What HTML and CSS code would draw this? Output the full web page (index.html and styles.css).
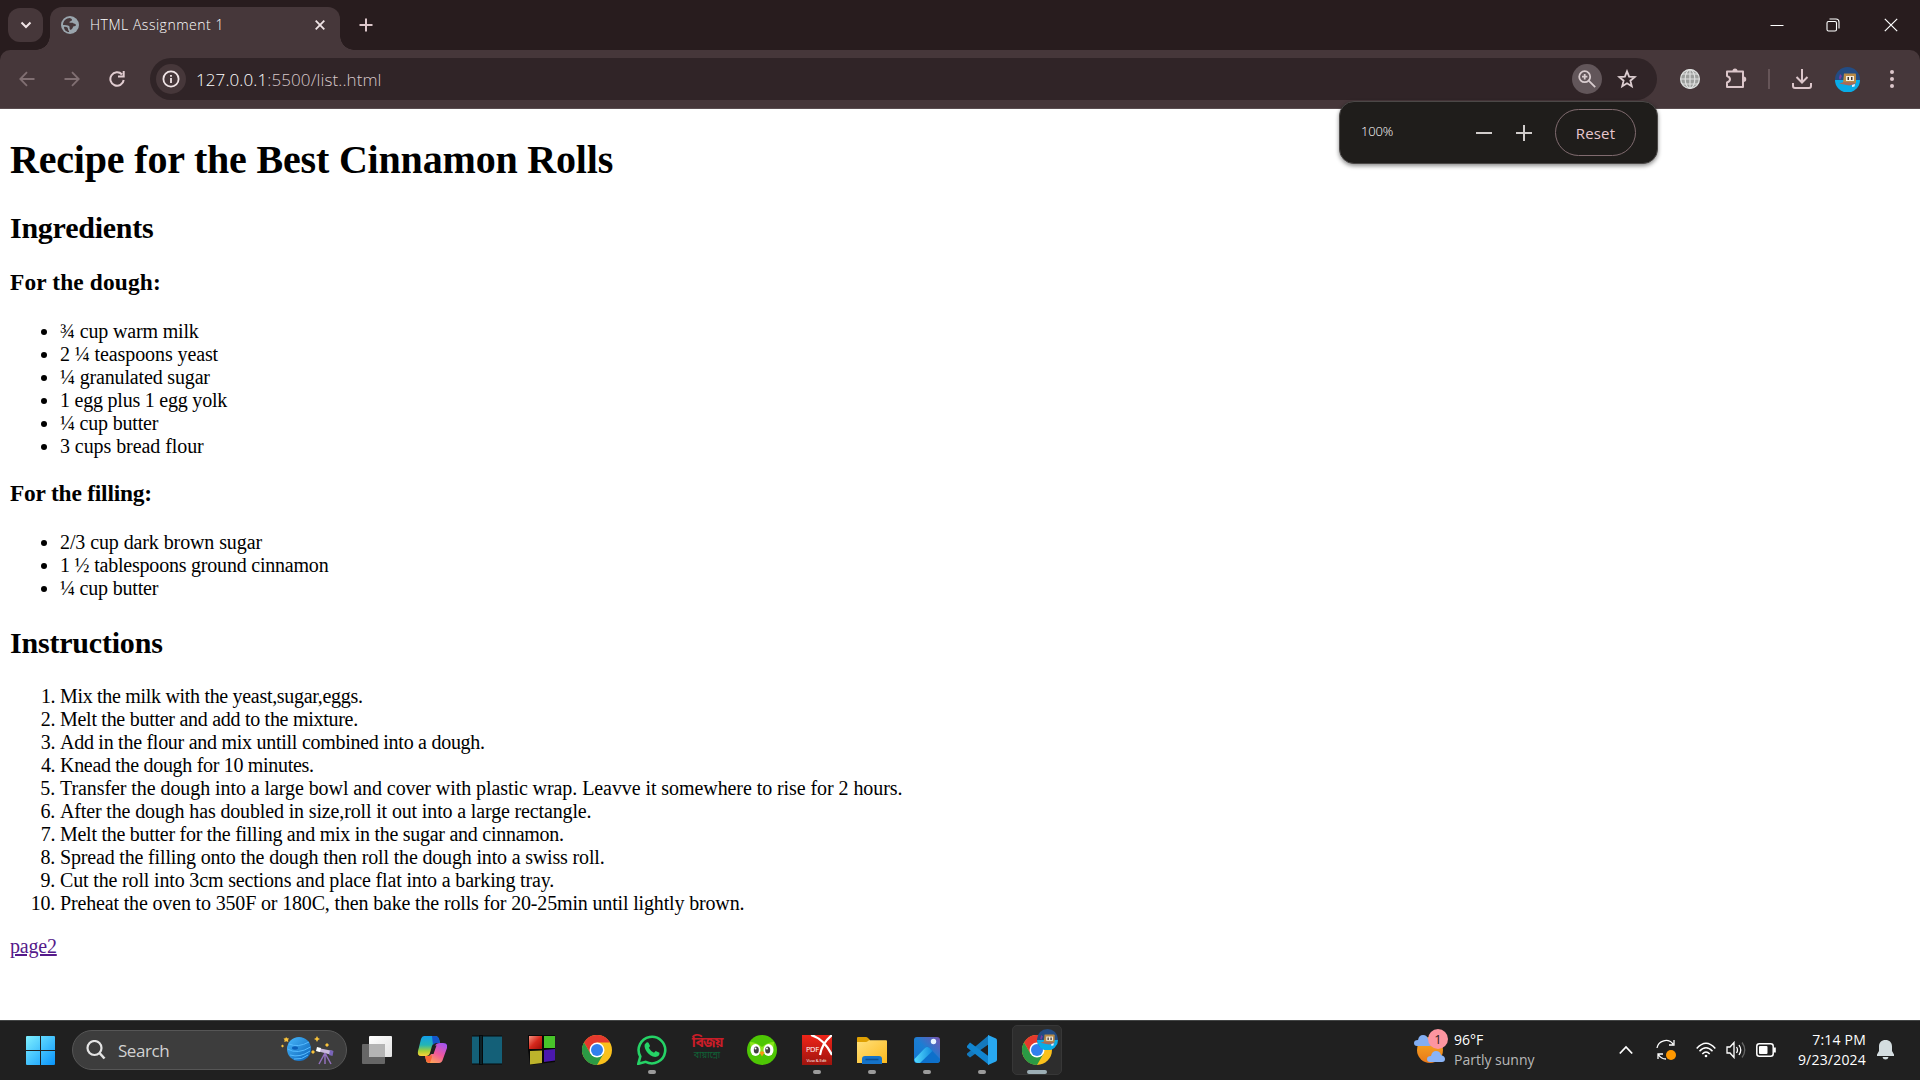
FILE: index.html
```html
<!DOCTYPE html>
<html lang="en">
<head>
<meta charset="utf-8">
<title>HTML Assignment 1</title>
<link rel="stylesheet" href="styles.css">
</head>
<body>
<div class="screen">
  <header class="tabstrip">
    <div class="tab-search"><svg width="12" height="8" viewBox="0 0 12 8"><path d="M1.5 1.5 6 6l4.5-4.5" fill="none" stroke="#f0e4e6" stroke-width="2"/></svg></div>
    <div class="tab">
      <svg class="favicon" width="18" height="18" viewBox="0 0 18 18"><circle cx="9" cy="9" r="9" fill="#9aa5ad"/><path d="M9 2c-4 0-7 3-7 7 2 0 5 0 6 1 1.200 1 0 2.500 1 3.500S12 12 12 11s3-.5 3-2-2.500-1-3-2-3 .5-3.500-.5S11 5 11 4s-1-1.500-2-2z" fill="#46373a"/><path d="M3 11c2-.5 4 .5 4 2s1.500 2 1 3C5 16 3 13.500 3 11z" fill="#46373a"/></svg>
      <span class="tab-title">HTML Assignment 1</span>
      <svg class="tab-close" width="10" height="10" viewBox="0 0 10 10"><path d="M.7.7l8.600 8.600M9.300.7.700 9.300" stroke="#f0e4e6" stroke-width="1.800"/></svg>
    </div>
    <svg class="new-tab" width="14" height="14" viewBox="0 0 14 14"><path d="M7 .5v13M.5 7h13" stroke="#dcc6ca" stroke-width="2"/></svg>
    <div class="window-controls">
      <svg width="14" height="14" viewBox="0 0 14 14"><path d="M.5 7.500h13" stroke="#fff"/></svg>
      <svg width="14" height="14" viewBox="0 0 14 14" fill="none" stroke="#fff" stroke-width="1.100"><rect x="1" y="3.500" width="9.500" height="9.500" rx="1.500"/><path d="M3.500 1h6.500q3 0 3 3v6.500"/></svg>
      <svg width="14" height="14" viewBox="0 0 14 14"><path d="M.8.8l12.400 12.400M13.200.800.800 13.200" stroke="#fff" stroke-width="1.200"/></svg>
    </div>
  </header>

  <nav class="toolbar">
    <div class="nav-buttons">
      <svg width="16" height="16" viewBox="0 0 16 16" fill="none" stroke="#806f72" stroke-width="1.800"><path d="M15.500 8H1.500M8 1.200 1.300 8 8 14.800"/></svg>
      <svg width="16" height="16" viewBox="0 0 16 16" fill="none" stroke="#806f72" stroke-width="1.800"><path d="M.5 8h14M8 1.200 14.700 8 8 14.800"/></svg>
      <svg width="16" height="16" viewBox="0 0 16 16" fill="none" stroke="#e2cdd1" stroke-width="2"><path d="M13 3.500A6.700 6.700 0 1 0 14.700 9M14.700 0v5.500H9"/></svg>
    </div>
    <div class="address">
      <span class="round info"><svg width="18" height="18" viewBox="0 0 18 18"><circle cx="9" cy="9" r="7.600" fill="none" stroke="#f0e4e6" stroke-width="1.800"/><path d="M9 8v5M9 5v1.800" stroke="#f0e4e6" stroke-width="1.800"/></svg></span>
      <span class="url"><b>127.0.0.1</b>:5500/list..html</span>
      <span class="round zoomed"><svg width="18" height="18" viewBox="0 0 18 18" fill="none" stroke="#d8cccf" stroke-width="1.800"><circle cx="6.700" cy="6.700" r="5.500"/><path d="M10.700 10.700l6.500 6.500M6.700 4v5.400M4 6.700h5.400"/></svg></span>
      <svg class="star" width="20" height="20" viewBox="0 0 20 20"><path d="M10 2.300l2.100 5.300 5.700.4-4.400 3.700 1.400 5.600-4.800-3-4.800 3 1.400-5.600L2.200 8l5.700-.4z" fill="none" stroke="#dccdd0" stroke-width="1.800"/></svg>
    </div>
    <div class="extensions">
      <svg width="20" height="20" viewBox="0 0 20 20"><circle cx="10" cy="10" r="10" fill="#9d9f9d"/><g fill="none" stroke="#dfe0df" stroke-width="1.200"><circle cx="10" cy="10" r="9.300"/><ellipse cx="10" cy="10" rx="4.800" ry="9.300"/><path d="M10 0v20M.5 10h19M2 5h16M2 15h16"/></g></svg>
      <svg width="22" height="22" viewBox="0 0 22 22"><path d="M2 3.500h16v15.500H2v-4.500q3-1 3-3.200t-3-3.300z" fill="none" stroke="#dcc6ca" stroke-width="2" stroke-linejoin="round"/><path d="M7.500 3a2.500 2.500 0 0 1 5 0M18.500 8.500a2.600 2.600 0 0 1 0 5.500" fill="#dcc6ca"/></svg>
      <i class="divider"></i>
      <svg width="22" height="22" viewBox="0 0 22 22" fill="none" stroke="#dcc6ca" stroke-width="2"><path d="M11 1v13M5.500 9l5.500 5.500L16.500 9M2 15v3q0 2 2 2h14q2 0 2-2v-3"/></svg>
      <svg width="25" height="25" viewBox="0 0 25 25"><use href="#avatar"/></svg>
      <svg width="4" height="18" viewBox="0 0 4 18" fill="#dcc6ca"><circle cx="2" cy="2" r="2"/><circle cx="2" cy="9" r="2"/><circle cx="2" cy="16" r="2"/></svg>
    </div>
  </nav>

  <main class="page">
    <h1>Recipe for the Best Cinnamon Rolls</h1>
    <h2>Ingredients</h2>
    <h3>For the dough:</h3>
    <ul class="dough">
      <li>¾ cup warm milk</li>
      <li>2 ¼ teaspoons yeast</li>
      <li>¼ granulated sugar</li>
      <li>1 egg plus 1 egg yolk</li>
      <li>¼ cup butter</li>
      <li>3 cups bread flour</li>
    </ul>
    <h3 class="filling-title">For the filling:</h3>
    <ul class="filling">
      <li>2/3 cup dark brown sugar</li>
      <li>1 ½ tablespoons ground cinnamon</li>
      <li>¼ cup butter</li>
    </ul>
    <h2 class="instructions">Instructions</h2>
    <ol>
      <li>Mix the milk with the yeast,sugar,eggs.</li>
      <li>Melt the butter and add to the mixture.</li>
      <li>Add in the flour and mix untill combined into a dough.</li>
      <li>Knead the dough for 10 minutes.</li>
      <li>Transfer the dough into a large bowl and cover with plastic wrap. Leavve it somewhere to rise for 2 hours.</li>
      <li>After the dough has doubled in size,roll it out into a large rectangle.</li>
      <li>Melt the butter for the filling and mix in the sugar and cinnamon.</li>
      <li>Spread the filling onto the dough then roll the dough into a swiss roll.</li>
      <li>Cut the roll into 3cm sections and place flat into a barking tray.</li>
      <li>Preheat the oven to 350F or 180C, then bake the rolls for 20-25min until lightly brown.</li>
    </ol>
    <a class="next" href="#page2">page2</a>
  </main>

  <footer class="taskbar">
    <svg class="start" width="29" height="29" viewBox="0 0 29 29"><defs><linearGradient id="win" x1="0" y1="0" x2="29" y2="29" gradientUnits="userSpaceOnUse"><stop stop-color="#7ff0ff"/><stop offset="1" stop-color="#0994fb"/></linearGradient></defs><path fill="url(#win)" d="M1 0h13v14H0V1q0-1 1-1zM15 0h13q1 0 1 1v13H15zM0 15h14v14H1q-1 0-1-1zM15 15h14v13q0 1-1 1H15z"/></svg>
    <div class="search">
      <svg width="20" height="20" viewBox="0 0 20 20" fill="none" stroke="#e4e4e4" stroke-width="2.200"><circle cx="8.500" cy="8" r="7"/><path d="M13.500 13l5 5.500" stroke-width="2.600"/></svg>
      <span>Search</span>
      <svg class="space" width="54" height="30" viewBox="0 0 54 30"><defs><linearGradient id="planet" x2="1" y2="1"><stop stop-color="#48b8fb"/><stop offset="1" stop-color="#0960b8"/></linearGradient></defs><circle cx="18" cy="14" r="12" fill="url(#planet)"/><path d="M8 9q9 4 20-2M6.500 14q10 6 23-2M9 20q10 3 20-4M13 24q8 1 14-4" fill="none" stroke="#54baff" stroke-width="1"/><ellipse cx="14" cy="13" rx="3" ry="1.700" fill="#0b5eb8"/><path d="M5 2l1.200 1.300 1.800.2-1 1.600.3 1.900-2-.8-2 .8.300-2L2.500 3.500l2-.3zM36 1l1 2 2 1-2 1-1 2-1-2-2-1 2-1zM46 8l2 2-2 2-2-2zM1.500 9.500l1.500 1.500-1.500 1.500L0 11zM32 15l2 2-2 2-2-2z" fill="#fac33a"/><path d="M37 13l15 3-1 4-15-4z" fill="#c7b8dc"/><path d="M36 12l4 1-1 4-4-1z" fill="#fff"/><path d="M49 15l3.500 1-1 5-3.500-1z" fill="#7964b8"/><path d="M44 18l-6 11M44 18v11M44 18l6 11" stroke="#9270bd" stroke-width="1.500"/></svg>
    </div>
    <div class="apps">
      <div class="app"><svg width="30" height="30" viewBox="0 0 30 30"><defs><linearGradient id="tv" x2="1" y2="1"><stop stop-color="#fff"/><stop offset="1" stop-color="#e2e2e2"/></linearGradient></defs><rect y="9" width="23" height="20" rx="1" fill="#666"/><rect x="7" y="1" width="23" height="21" rx="1" fill="url(#tv)"/><path d="M7 9h16v13H8q-1 0-1-1z" fill="#b4b4b4"/></svg></div>
      <div class="app"><svg width="30" height="30" viewBox="0 0 30 30"><defs><linearGradient id="cpa" x1="0" y1="0" x2="0" y2="1"><stop stop-color="#139ee9"/><stop offset=".45" stop-color="#23b5b5"/><stop offset=".75" stop-color="#a5cf36"/><stop offset="1" stop-color="#ffd23a"/></linearGradient><linearGradient id="cpb" x1=".8" y1="0" x2=".2" y2="1"><stop stop-color="#a454f1"/><stop offset=".5" stop-color="#f1589b"/><stop offset="1" stop-color="#ffad50"/></linearGradient></defs><path d="M7 1h11q3 0 4 3l1 4h-4q-3 0-4 3l-2 7q-1 3-4 3H4q-4 0-3-5L4 4q1-3 3-3z" fill="url(#cpa)"/><path d="M15 1h3q3 0 4 3l1 4h-4q-2 0-3 2z" fill="#1455cb"/><path d="M23 8h3q5 0 4 5l-4 11q-1 4-4 4H12q-3 0-3-3l-1-4h3q3 0 4-4l3-6q1-3 5-3z" fill="url(#cpb)"/><path d="M8 21h4q2 0 2-2l1 3-2 6q-4-1-4-3z" fill="#fa6738"/><path d="M16.500 10.500h3l-3 8.500h-3.500z" fill="#202020"/></svg></div>
      <div class="app"><svg width="30" height="30" viewBox="0 0 30 30"><path fill="#146078" d="M0 1h30v28H0z"/><path fill="#050a0c" d="M7 0h4v30H7zM0 .5h30v1H0zM0 28.500h30v1H0z"/><path fill="#235a6a" d="M8.700 1h.6v28h-.6z"/></svg></div>
      <div class="app"><svg width="30" height="30" viewBox="0 0 30 30"><defs><linearGradient id="redsq" x2="1" y2="1"><stop stop-color="#f59381"/><stop offset=".5" stop-color="#d5281c"/><stop offset="1" stop-color="#9a0e08"/></linearGradient></defs><path d="M1 0h27v27L3 30 1 15z" fill="#080808"/><path d="M2 1h13v13H2z" fill="url(#redsq)"/><path d="M17 1h11v12H17z" fill="#48c42a"/><path d="M3 16l12-.5V28L3 29.500z" fill="#bdb32b"/><path d="M17 15l11-1v11.500L17 27z" fill="#4b18ad"/></svg></div>
      <div class="app"><svg width="30" height="30" viewBox="0 0 30 30"><g id="chrome"><circle cx="15" cy="15" r="15" fill="#fbc11c"/><path d="M2 7.500A15 15 0 0 1 28 7.500H15L8.500 18.700z" fill="#e5392d"/><path d="M2 7.500A15 15 0 0 0 15 30l6.500-11.300H8.500z" fill="#2b9a45"/><circle cx="15" cy="15" r="7.500" fill="#fff"/><circle cx="15" cy="15" r="6" fill="#3180ee"/></g></svg></div>
      <div class="app run"><svg width="30" height="30" viewBox="0 0 30 30"><path d="M1.300 28.800l2-7.300A13.300 13.300 0 1 1 8.700 26.800z" fill="none" stroke="#25d366" stroke-width="2.600"/><path d="M9.500 7.500q1-.8 2 .2l1.500 3q0 1-1.200 2 1.700 3.500 5.200 5l1.700-1.700 3.800 1.800q.3 4-4.300 4.200C12 21.500 6.500 14 7.700 9.500z" fill="#25d366"/></svg></div>
      <div class="app bijoy"><span class="bn-top">বিজয়</span><span class="bn-bottom">বায়ান্নো</span></div>
      <div class="app"><svg width="30" height="30" viewBox="0 0 30 30"><circle cx="15" cy="15" r="15" fill="#4ec604"/><path d="M3 7q6 0 12 5 6-5 12-5 0 8-4 12H7Q3 14 3 7z" fill="#8ae51b"/><ellipse cx="8.500" cy="15" rx="5" ry="6" fill="#fff"/><ellipse cx="21.500" cy="15" rx="5" ry="6" fill="#fff"/><ellipse cx="9.300" cy="15" rx="2.500" ry="3.500" fill="#414141"/><ellipse cx="20.700" cy="15" rx="2.500" ry="3.500" fill="#414141"/><circle cx="8.500" cy="13.500" r="1" fill="#fff"/><circle cx="20" cy="13.500" r="1" fill="#fff"/><path d="M12.500 17.500l2.500-1.500 2.500 1.500-2.500 4z" fill="#f69a12"/></svg></div>
      <div class="app run"><svg width="30" height="30" viewBox="0 0 30 30"><defs><linearGradient id="pdf" x2="0" y2="1"><stop stop-color="#ee2418"/><stop offset="1" stop-color="#9f140e"/></linearGradient></defs><path fill="url(#pdf)" d="M0 0h30v30H0z"/><path d="M9 0q13 4 21 20M30 0Q20 8 18 20" fill="none" stroke="#fff" stroke-width="2.200"/><text class="pdf-name" x="4" y="17">PDF</text><text class="pdf-sub" x="4.500" y="26.500">View &amp; Edit</text></svg></div>
      <div class="app run"><svg width="30" height="30" viewBox="0 0 30 30"><defs><linearGradient id="folder" x2="1" y2="1"><stop stop-color="#ffe07a"/><stop offset="1" stop-color="#fcb91d"/></linearGradient></defs><path d="M0 3q0-1 1-1h8q1 0 2 1l2 2v6H0z" fill="#dfa003"/><path d="M0 7h9q1 0 2-1l1-.7h17q1 0 1 1V28H0z" fill="url(#folder)"/><path d="M5 29v-5q0-3 3-3h14q3 0 3 3v5z" fill="#1573c9"/><path d="M8.500 24.500h13" stroke="#0b4f92" stroke-width="1.500"/></svg></div>
      <div class="app run"><svg width="30" height="30" viewBox="0 0 30 30"><defs><linearGradient id="photo" x1="0" y1="1" x2="1" y2="0"><stop stop-color="#1375d0"/><stop offset=".5" stop-color="#1b7ed3"/><stop offset="1" stop-color="#7a55b0"/></linearGradient><linearGradient id="hill"><stop stop-color="#55dcff"/><stop offset="1" stop-color="#1289dc"/></linearGradient></defs><rect x="2" y="2" width="26" height="26" rx="3" fill="url(#photo)"/><path d="M3 27L13 13q2-2.500 4.500 0L28 24q0 4-4 4H6q-2 0-3-1z" fill="#0d70cb"/><path d="M2.500 24L13 13q2-2 4.500 0l3 3L8 28H6q-3 0-3.500-3z" fill="url(#hill)"/><circle cx="21.500" cy="6.500" r="2.700" fill="#e9f6ff"/></svg></div>
      <div class="app run"><svg width="30" height="30" viewBox="0 0 30 30"><path d="M22 0v9L3 22.500 0 20v-1.500z" fill="#1479bd"/><path d="M0 11l3-3.500 19 14V30L0 12.500z" fill="#1185d0"/><path d="M21 0l8 3.500q1 .5 1 2v19q0 1.500-1 2L21 30z" fill="#28a8f1"/></svg></div>
      <div class="app run active"><svg width="30" height="30" viewBox="0 0 30 30"><use href="#chrome"/></svg><svg class="profile" width="21" height="21" viewBox="0 0 25 25"><g id="avatar"><circle cx="12.500" cy="12.500" r="12.500" fill="#234c83"/><path d="M0 13h25a12.500 12.500 0 0 1-25 0z" fill="#09ace7"/><path d="M9 6.500h11q1 0 1 1V16H8z" fill="#b78a47"/><path d="M11 9h8v5h-8z" fill="#f4eddd"/><path d="M12.500 10h1.500v3h-1.500zM16 10h1.500v3H16z" fill="#3d3531"/><path d="M4 16.500l5-1.500 10 .5 2 1.500-7 1.500z" fill="#a76a5c"/><path d="M5 7l2 2-2 4-1-2z" fill="#783ba5"/><path d="M17 18l3-1-.5 2.500-2.500.5z" fill="#eef"/></g></svg></div>
    </div>
    <div class="weather">
      <span class="weather-icon">
        <svg width="32" height="30" viewBox="0 0 32 30"><defs><linearGradient id="sun" x2="0" y2="1"><stop stop-color="#f8ae24"/><stop offset="1" stop-color="#e97819"/></linearGradient></defs><circle cx="16" cy="15" r="13" fill="url(#sun)"/><path d="M3 11q-3 0-3-3t4-3q1-5 5-5t5 4q4 1 4 4t-3 3z" fill="#82aef3"/><path d="M16 27q-3 0-3-3t4-3q1-5 5-5t5 4q4 1 4 4t-3 3z" fill="#8ab4f7"/></svg>
        <b class="count">1</b>
      </span>
      <span class="weather-text"><span class="temp">96°F</span><span class="sky">Partly sunny</span></span>
    </div>
    <div class="tray">
      <svg width="14" height="10" viewBox="0 0 14 10"><path d="M.8 8.500L7 2l6.200 6.500" fill="none" stroke="#fff" stroke-width="1.800"/></svg>
      <svg width="20" height="22" viewBox="0 0 20 22"><path d="M1 9a9 9 0 0 1 16-4M18 1v5h-5M2 20v-5h5M2 15q3 5 8 5" fill="none" stroke="#fff" stroke-width="1.300"/><circle cx="15" cy="16" r="5" fill="#ff9800"/></svg>
      <svg width="20" height="16" viewBox="0 0 20 16" fill="none" stroke="#fff" stroke-width="1.500"><path d="M.7 6.500Q10-4 19.300 6.500M3.500 9.200q6.500-7 13 0M6.300 12q3.700-4 7.400 0"/><circle cx="10" cy="14" r="1.300" fill="#fff" stroke="none"/></svg>
      <svg width="21" height="18" viewBox="0 0 21 18" fill="none" stroke="#fff" stroke-width="1.300"><path d="M1 6h3l4-4.500v15L4 12H1zM10.500 6q2 3 0 6M13 4q3.500 5 0 10"/><path d="M16 1.500q5.500 7.500 0 15" stroke="#666"/></svg>
      <svg width="20" height="14" viewBox="0 0 20 14"><rect x=".8" y=".8" width="16.400" height="12.400" rx="2.500" fill="none" stroke="#fff" stroke-width="1.500"/><rect x="3" y="3" width="8.500" height="8" rx="1" fill="#fff"/><path d="M18.800 4.500v5" stroke="#fff" stroke-width="2"/></svg>
    </div>
    <div class="clock"><span class="hour">7:14 PM</span><span class="date">9/23/2024</span></div>
    <svg class="bell" width="17" height="20" viewBox="0 0 17 20"><path d="M8.500 0C4.500 0 2 2.500 2 6.500V11L0 14.500V16h17v-1.500L15 11V6.500C15 2.500 12.500 0 8.500 0zM5.500 17h6q-.5 2.500-3 2.500t-3-2.500z" fill="#d4dde0"/></svg>
  </footer>

  <aside class="zoom-bubble">
    <span class="percent">100%</span>
    <svg width="16" height="16" viewBox="0 0 16 16"><path d="M0 8h16" stroke="#d0cccb" stroke-width="2"/></svg>
    <svg width="16" height="16" viewBox="0 0 16 16"><path d="M0 8h16M8 0v16" stroke="#d0cccb" stroke-width="2"/></svg>
    <span class="reset">Reset</span>
  </aside>
</div>
</body>
</html>
```
FILE: styles.css
```css
* { box-sizing: border-box; }
body { margin: 0; background: #fff; }
svg { display: block; flex: none; }
.screen { position: relative; width: 1920px; height: 1080px; display: flex; flex-direction: column; overflow: hidden; font-family: "Open Sans", "Noto Sans", sans-serif; }

/* browser window */
.tabstrip { flex: none; height: 50px; display: flex; align-items: center; padding-left: 8px; background: #281c1e; box-shadow: 0 12px 0 #281c1e; }
.tab-search { width: 35px; height: 34px; border-radius: 12px; background: #46373a; display: grid; place-items: center; }
.tab { position: relative; z-index: 1; width: 290px; height: 43px; margin: 7px 0 0 7px; padding: 0 15px 7px 11px; display: flex; align-items: center; border-radius: 12px 12px 0 0; background: #46373a; }
.tab::before, .tab::after { content: ""; position: absolute; bottom: 0; width: 14px; height: 14px; }
.tab::before { left: -14px; background: radial-gradient(circle at 0 0, transparent 13.500px, #46373a 14px); }
.tab::after { right: -14px; background: radial-gradient(circle at 100% 0, transparent 13.500px, #46373a 14px); }
.tab-title { margin-left: 11px; flex: 1; font-size: 14px; font-weight: 300; line-height: 20px; letter-spacing: .52px; color: #fff; white-space: nowrap; }
.new-tab { margin-left: 19px; }
.window-controls { margin-left: auto; padding-right: 22px; display: flex; }
.window-controls svg { margin-left: 42px; }
.window-controls svg:last-child { margin-left: 44px; }
.toolbar { position: relative; flex: none; height: 59px; display: flex; align-items: center; background: #46373a; border-bottom: 1px solid #5a4d50; border-radius: 10px 10px 0 0; }
.nav-buttons { width: 150px; padding-left: 19px; display: flex; gap: 29px; }
.address { width: 1507px; height: 42px; border-radius: 21px; padding: 0 20px 0 6px; display: flex; align-items: center; background: #302427; }
.round { width: 30px; height: 30px; border-radius: 50%; display: grid; place-items: center; }
.info { background: #46373a; }
.zoomed { background: #62565a; margin-right: 15px; }
.url { flex: 1; margin-left: 10px; font-size: 17px; font-weight: 300; letter-spacing: .1px; color: #d8c8cb; }
.url b { font-weight: 300; color: #fff; }
.extensions { margin-left: 23px; display: flex; align-items: center; }
.extensions svg:nth-child(2) { margin-left: 25px; }
.divider { width: 2px; height: 20px; margin: 0 21px 0 21px; background: #665558; }
.extensions svg:nth-child(5) { margin-left: 22px; }
.extensions svg:nth-child(6) { margin-left: 30px; }

/* document */
.page { flex: 1; padding: 28px 10px 0; background: #fff; color: #000; font: 20px/23px "Liberation Serif", "Times New Roman", serif; }
.page h1 { margin: 0 0 28px; font-size: 40px; line-height: 46px; letter-spacing: -.18px; }
.page h2 { margin: 0 0 24px; font-size: 30px; line-height: 34px; letter-spacing: -.25px; }
.page h3 { margin: 0 0 24px; font-size: 23.400px; line-height: 27px; letter-spacing: .13px; }
.page .filling-title { letter-spacing: -.2px; }
.page ul, .page ol { margin: 0 0 22px; padding-left: 50px; letter-spacing: -.16px; }
.page .instructions { margin: 26px 0 25px; letter-spacing: -.2px; }
.page ol { margin-bottom: 20px; }
.dough li:nth-child(2) { letter-spacing: -.1px; }
.dough li:nth-child(4) { letter-spacing: -.22px; }
.dough li:nth-child(5) { letter-spacing: -.2px; }
.dough li:nth-child(6) { letter-spacing: -.07px; }
.filling li:nth-child(1) { letter-spacing: -.1px; }
.filling li:nth-child(2) { letter-spacing: -.21px; }
.filling li:nth-child(3) { letter-spacing: -.2px; }
ol li:nth-child(1) { letter-spacing: -.31px; }
ol li:nth-child(2) { letter-spacing: -.28px; }
ol li:nth-child(3) { letter-spacing: -.27px; }
ol li:nth-child(4) { letter-spacing: -.31px; }
ol li:nth-child(5) { letter-spacing: -.075px; }
ol li:nth-child(6) { letter-spacing: -.145px; }
ol li:nth-child(7) { letter-spacing: -.27px; }
ol li:nth-child(8) { letter-spacing: -.168px; }
.next { color: #551a8b; letter-spacing: -.2px; }

/* taskbar */
.taskbar { flex: none; height: 60px; padding-bottom: 1px; border-top: 1px solid #434545; background: #202020; display: flex; align-items: center; }
.start { margin-left: 26px; }
.search { width: 275px; height: 40px; margin-left: 17px; padding: 0 11px 0 13px; display: flex; align-items: center; border-radius: 20px; border: 1px solid #565656; background: #3d3d3d; color: #d2d2d2; font-size: 17px; letter-spacing: -.45px; }
.search span { margin-left: 12px; flex: 1; }
.apps { margin-left: 5px; display: flex; }
.app { position: relative; width: 50px; height: 50px; margin-right: 5px; display: grid; place-items: center; border-radius: 5px; }
.run::after { content: ""; position: absolute; left: 21px; bottom: 1px; width: 8px; height: 4px; border-radius: 2px; background: #9b9b9b; }
.active { background: #2d2d2d; border: 1px solid #373737; }
.active::after { left: 14px; bottom: 0; width: 20px; background: #9caeb5; }
.profile { position: absolute; left: 24px; top: 3px; }
.bijoy { align-content: center; font-family: "Noto Sans Bengali", "Noto Sans", sans-serif; line-height: 13px; white-space: nowrap; }
.bn-top { font-size: 14px; font-weight: 700; letter-spacing: -1px; color: #c91d28; }
.bn-bottom { font-size: 9px; color: #106036; }
.pdf-name { font-size: 7.500px; letter-spacing: -.4px; fill: #fff; }
.pdf-sub { font-size: 4px; letter-spacing: -.1px; fill: #fff; }
.weather { margin-left: 347px; width: 205px; display: flex; align-items: center; }
.weather-icon { position: relative; width: 40px; height: 38px; padding-top: 4px; }
.count { position: absolute; left: 14px; top: -2px; width: 20px; height: 20px; border-radius: 50%; background: #fd95a0; color: #321c20; font-size: 13px; font-weight: 400; line-height: 20px; text-align: center; }
.weather-text { display: flex; flex-direction: column; padding-bottom: 1px; font-size: 14px; line-height: 20px; color: #fff; }
.sky { color: #b8b8b8; }
.tray { display: flex; align-items: center; width: 158px; }
.tray svg:nth-child(2) { margin-left: 23px; }
.tray svg:nth-child(3) { margin-left: 20px; }
.tray svg:nth-child(4) { margin-left: 10px; }
.tray svg:nth-child(5) { margin-left: 9px; }
.clock { width: 89px; padding-bottom: 1px; display: flex; flex-direction: column; align-items: flex-end; font-size: 14px; line-height: 20px; letter-spacing: .2px; color: #fff; }
.bell { margin-left: 11px; }

/* page zoom bubble lies over the toolbar and the document */
.zoom-bubble { position: absolute; z-index: 2; left: 1339px; top: 101px; width: 319px; height: 63px; padding: 0 21px; display: flex; align-items: center; border-radius: 15px; border: 1px solid #4b4847; background: #1f1d1b; box-shadow: 0 2px 4px rgba(0, 0, 0, .45); }
.percent { width: 115px; padding-bottom: 4px; font-size: 13px; font-weight: 300; line-height: 18px; letter-spacing: -.2px; color: #fff; }
.zoom-bubble svg { margin-right: 24px; }
.zoom-bubble svg + svg { margin-right: 23px; }
.reset { flex: none; width: 81px; height: 47px; border: 1px solid #806b6f; border-radius: 24px; display: grid; place-items: center; font-size: 15px; letter-spacing: .2px; color: #e8c7ce; }
```
